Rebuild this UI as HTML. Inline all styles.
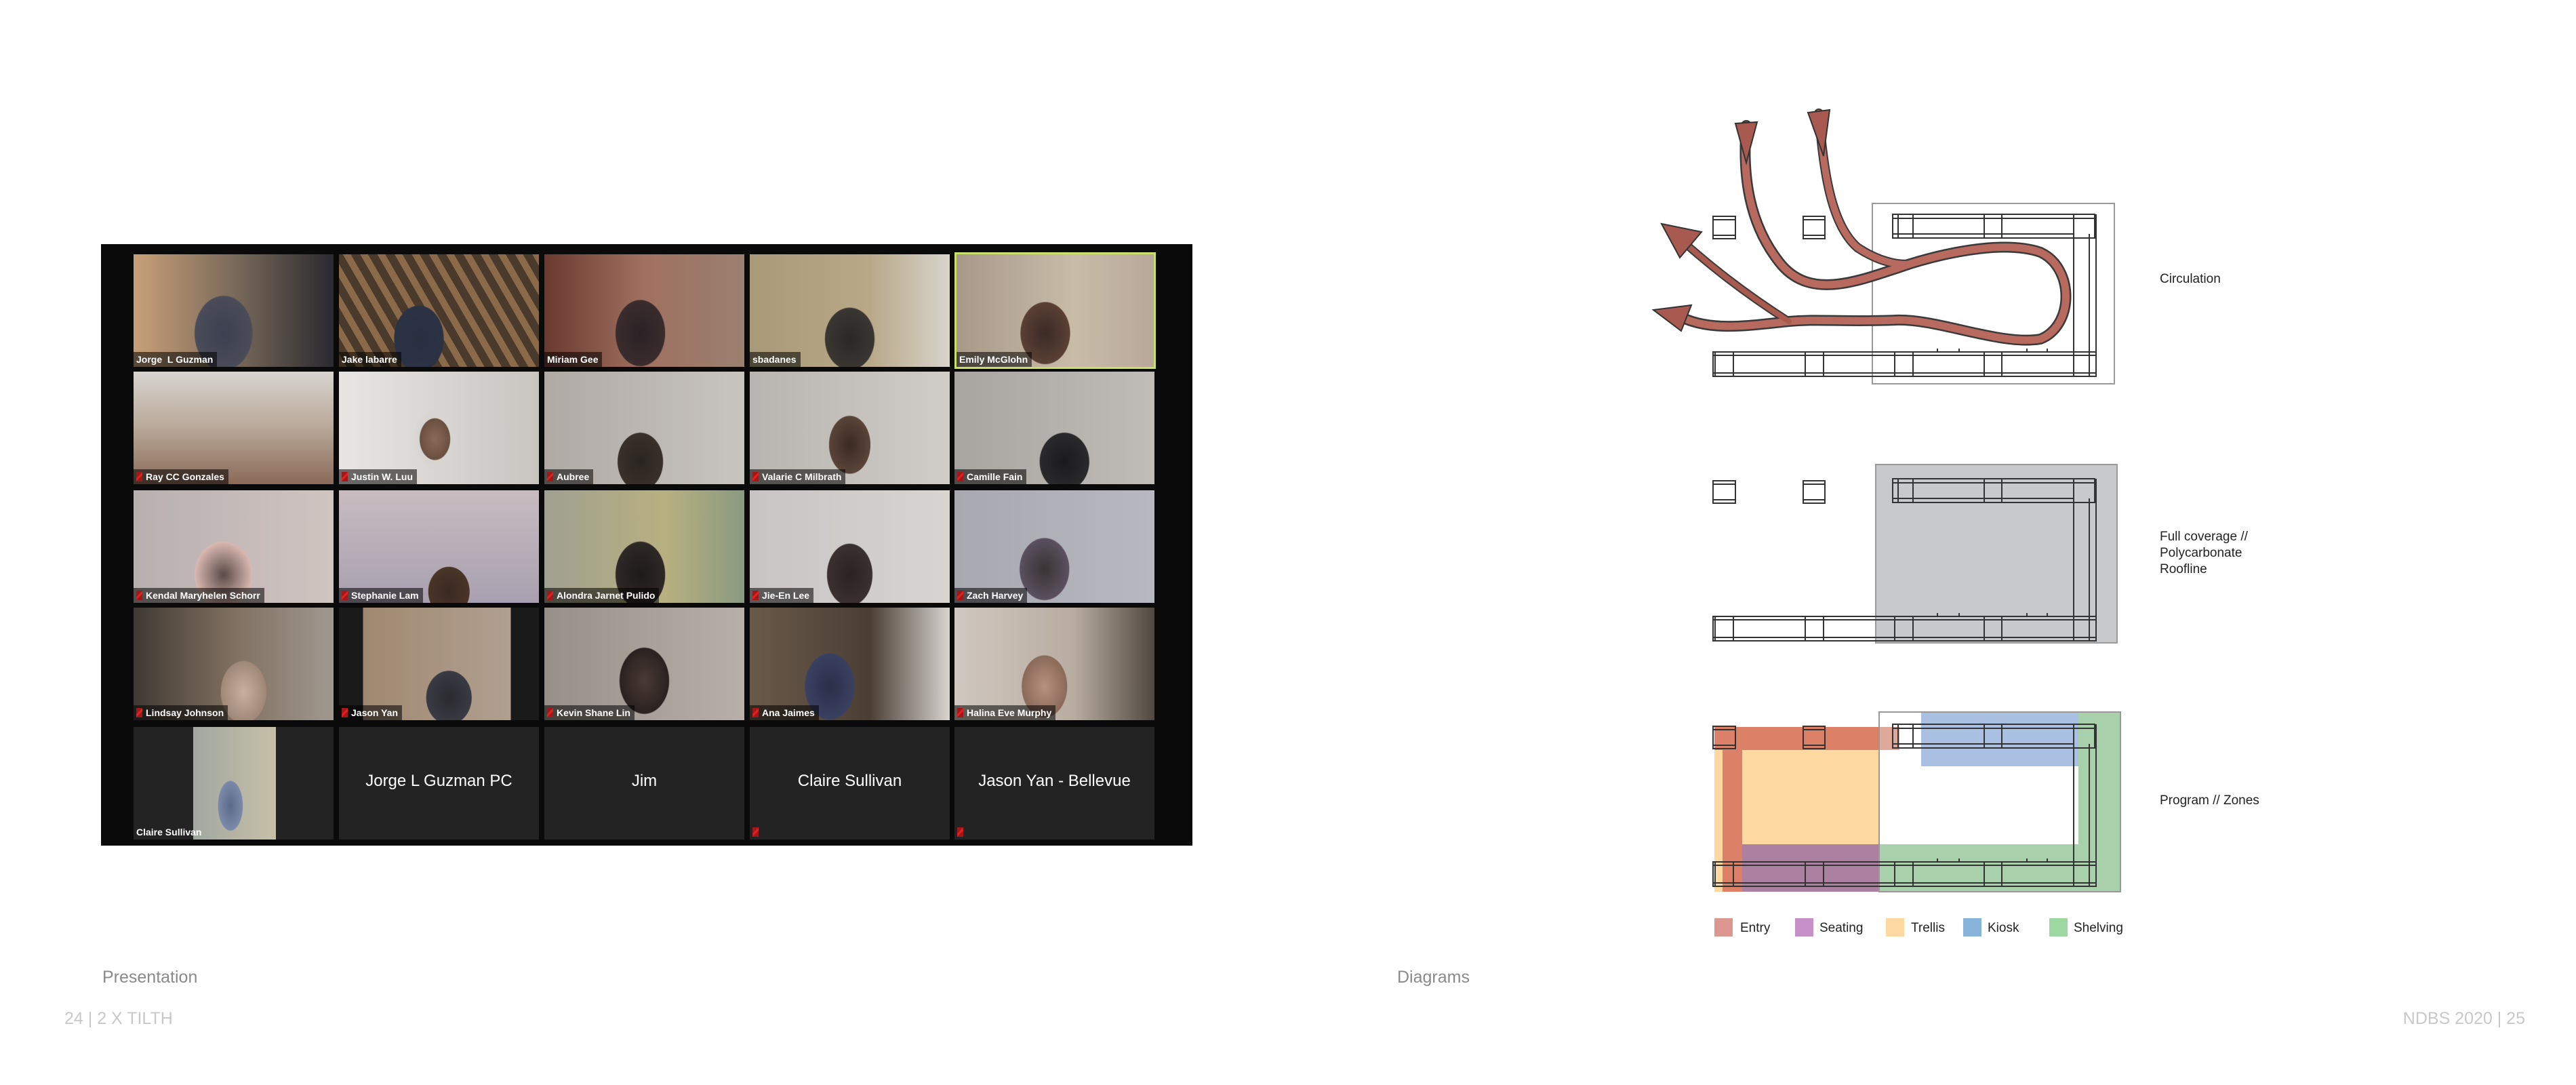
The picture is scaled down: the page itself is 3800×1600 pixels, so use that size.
<!DOCTYPE html>
<html><head><meta charset="utf-8"><style>
html,body{margin:0;padding:0;background:#fff;}
body{width:3800px;height:1600px;position:relative;overflow:hidden;font-family:"Liberation Sans",sans-serif;}
.box{position:absolute;left:149px;top:360px;width:1610px;height:887px;background:#0a0a0a;}
.t{position:absolute;width:295px;height:166px;overflow:hidden;}
.n{position:absolute;left:0;bottom:0;height:22px;line-height:22px;padding:0 6px 0 4px;background:rgba(0,0,0,.55);color:#fff;font-size:14px;font-family:"Liberation Sans Narrow","Liberation Sans",sans-serif;font-weight:bold;white-space:nowrap;}
.n i{display:inline-block;width:9px;height:14px;margin-right:5px;vertical-align:-2px;background:linear-gradient(135deg,transparent 40%,#e02020 40%,#e02020 60%,transparent 60%),#a01818;}
.d{background:#232323;}
.c{position:absolute;left:0;right:0;top:66px;text-align:center;color:#fff;font-size:24px;font-family:"Liberation Sans Narrow","Liberation Sans",sans-serif;}
.lab{position:absolute;font-size:19px;color:#222;line-height:24px;}
.foot{position:absolute;font-size:25px;}
</style></head><body>
<div class="box"></div>

<!-- row 1 -->
<div class="t" style="left:197px;top:375px;background:radial-gradient(ellipse 70px 90px at 45% 70%,#3c4050 0,#4a4c58 60%,transparent 62%),linear-gradient(90deg,#c8a078,#7a6a5a 50%,#2a2a30)"><div class="n">Jorge &nbsp;L Guzman</div></div>
<div class="t" style="left:500px;top:375px;background:radial-gradient(ellipse 60px 80px at 40% 75%,#283040 0,#2a3244 60%,transparent 62%),repeating-linear-gradient(60deg,#8a6a48 0 10px,#4a3a2c 10px 22px)"><div class="n">Jake labarre</div></div>
<div class="t" style="left:803px;top:375px;background:radial-gradient(ellipse 60px 80px at 48% 70%,#2a2226 0,#3a2c2c 60%,transparent 62%),linear-gradient(90deg,#6a3a30,#a07060 50%,#9a8070)"><div class="n">Miriam Gee</div></div>
<div class="t" style="left:1106px;top:375px;background:radial-gradient(ellipse 60px 75px at 50% 75%,#2a2826 0,#3a3632 60%,transparent 62%),linear-gradient(90deg,#a89a78,#b8a888 60%,#d8d4cc)"><div class="n">sbadanes</div></div>
<div class="t" style="left:1408px;top:372px;width:297px;height:172px;background:#c8e06a"></div>
<div class="t" style="left:1411px;top:375px;width:291px;height:166px;background:radial-gradient(ellipse 60px 75px at 45% 70%,#3a2a26 0,#5a4034 60%,transparent 62%),linear-gradient(90deg,#a89888,#c8bca8 60%,#b8a898)"><div class="n">Emily McGlohn</div></div>
<!-- row 2 -->
<div class="t" style="left:197px;top:548px;background:linear-gradient(180deg,#d8d4d0,#b8a898 50%,#8a6a58)"><div class="n"><i></i>Ray CC Gonzales</div></div>
<div class="t" style="left:500px;top:548px;background:radial-gradient(ellipse 55px 75px at 48% 60%,#8a6a58 0,#6a5040 40%,#d8d4d0 42%,transparent 62%),linear-gradient(90deg,#e8e6e4,#c8c4c0)"><div class="n"><i></i>Justin W. Luu</div></div>
<div class="t" style="left:803px;top:548px;background:radial-gradient(ellipse 55px 70px at 48% 80%,#2a2420 0,#3a302a 60%,transparent 62%),linear-gradient(90deg,#b0aaa5,#c8c4c0)"><div class="n"><i></i>Aubree</div></div>
<div class="t" style="left:1106px;top:548px;background:radial-gradient(ellipse 50px 70px at 50% 65%,#3a2a24 0,#5a4438 60%,transparent 62%),linear-gradient(90deg,#b8b4b0,#d0ccc8)"><div class="n"><i></i>Valarie C Milbrath</div></div>
<div class="t" style="left:1408px;top:548px;background:radial-gradient(ellipse 60px 70px at 55% 80%,#1a1a1c 0,#2a2a2c 60%,transparent 62%),linear-gradient(90deg,#a8a4a0,#c0bcb8)"><div class="n"><i></i>Camille Fain</div></div>
<!-- row 3 -->
<div class="t" style="left:197px;top:723px;background:radial-gradient(ellipse 70px 80px at 45% 75%,#5a4a48 0,#d8b8b0 60%,transparent 62%),linear-gradient(90deg,#b8b0b0,#d0c4c0)"><div class="n"><i></i>Kendal Maryhelen Schorr</div></div>
<div class="t" style="left:500px;top:723px;background:radial-gradient(ellipse 50px 60px at 55% 90%,#3a2a22 0,#4a3428 60%,transparent 62%),linear-gradient(180deg,#c8bcc0,#a8a0b0)"><div class="n"><i></i>Stephanie Lam</div></div>
<div class="t" style="left:803px;top:723px;background:radial-gradient(ellipse 60px 80px at 48% 75%,#1e1a1a 0,#2e2826 60%,transparent 62%),linear-gradient(90deg,#a0a090,#b8b080 60%,#8a9a80)"><div class="n"><i></i>Alondra Jarnet Pulido</div></div>
<div class="t" style="left:1106px;top:723px;background:radial-gradient(ellipse 55px 75px at 50% 75%,#2a2220 0,#3a3030 60%,transparent 62%),linear-gradient(90deg,#c8c4c4,#d8d4d0)"><div class="n"><i></i>Jie-En Lee</div></div>
<div class="t" style="left:1408px;top:723px;background:radial-gradient(ellipse 60px 75px at 45% 70%,#3a3434 0,#5a5060 60%,transparent 62%),linear-gradient(90deg,#a8a8b0,#b8b8c0)"><div class="n"><i></i>Zach Harvey</div></div>
<!-- row 4 -->
<div class="t" style="left:197px;top:896px;background:radial-gradient(ellipse 55px 75px at 55% 75%,#c8b0a0 0,#a08878 60%,transparent 62%),linear-gradient(90deg,#403a34,#807060 50%,#a09890)"><div class="n"><i></i>Lindsay Johnson</div></div>
<div class="t" style="left:500px;top:896px;background:radial-gradient(ellipse 55px 65px at 55% 80%,#2a2a30 0,#3a3a44 60%,transparent 62%),linear-gradient(90deg,#1a1a1a 12%,#a08870 12%,#b0a090 86%,#1a1a1a 86%)"><div class="n"><i></i>Jason Yan</div></div>
<div class="t" style="left:803px;top:896px;background:radial-gradient(ellipse 60px 80px at 50% 65%,#4a3a34 0,#2a2220 60%,transparent 62%),linear-gradient(90deg,#989088,#b8b0a8)"><div class="n"><i></i>Kevin Shane Lin</div></div>
<div class="t" style="left:1106px;top:896px;background:radial-gradient(ellipse 60px 80px at 40% 70%,#2a3048 0,#3a4060 60%,transparent 62%),linear-gradient(90deg,#6a5a4a,#4a3e34 60%,#d8d4d0)"><div class="n"><i></i>Ana Jaimes</div></div>
<div class="t" style="left:1408px;top:896px;background:radial-gradient(ellipse 55px 75px at 45% 70%,#b89080 0,#8a6a58 60%,transparent 62%),linear-gradient(90deg,#d0c8c0,#b8aca0 60%,#504840)"><div class="n"><i></i>Halina Eve Murphy</div></div>
<!-- row 5 -->
<div class="t d" style="left:197px;top:1072px"><div style="position:absolute;left:88px;top:0;width:122px;height:166px;background:radial-gradient(ellipse 30px 60px at 45% 70%,#5a6a88 0,#7a8aa8 60%,transparent 62%),linear-gradient(90deg,#a0a8a0,#c8c0a8)"></div><div class="n" style="background:none">Claire Sullivan</div></div>
<div class="t d" style="left:500px;top:1072px"><div class="c">Jorge L Guzman PC</div></div>
<div class="t d" style="left:803px;top:1072px"><div class="c">Jim</div></div>
<div class="t d" style="left:1106px;top:1072px"><div class="c">Claire Sullivan</div><div class="n" style="background:none"><i></i></div></div>
<div class="t d" style="left:1408px;top:1072px"><div class="c">Jason Yan - Bellevue</div><div class="n" style="background:none"><i></i></div></div>

<div class="foot" style="left:151px;top:1427px;color:#8a8a8a">Presentation</div>
<div class="foot" style="left:95px;top:1488px;color:#c8c8c8">24 | 2 X TILTH</div>
<div class="foot" style="left:2061px;top:1427px;color:#8a8a8a">Diagrams</div>
<div class="foot" style="right:75px;top:1488px;color:#c8c8c8">NDBS 2020 | 25</div>

<svg width="3800" height="1600" style="position:absolute;left:0;top:0" xmlns="http://www.w3.org/2000/svg">
<defs>
<g id="st" fill="none" stroke="#333" stroke-width="2">
<rect x="2527" y="319" width="33" height="33"/><line x1="2527" y1="324" x2="2560" y2="324"/><line x1="2527" y1="347" x2="2560" y2="347"/>
<rect x="2660" y="319" width="32" height="33"/><line x1="2660" y1="324" x2="2692" y2="324"/><line x1="2660" y1="347" x2="2692" y2="347"/>
<rect x="2792" y="316" width="298" height="35"/><line x1="2792" y1="322" x2="3090" y2="322"/><line x1="2792" y1="345" x2="3059" y2="345"/>
<line x1="2800" y1="316" x2="2800" y2="351"/><line x1="2822" y1="316" x2="2822" y2="351"/><line x1="2927" y1="316" x2="2927" y2="351"/><line x1="2953" y1="316" x2="2953" y2="351"/>
<line x1="3059" y1="316" x2="3059" y2="555"/><line x1="3082" y1="345" x2="3082" y2="555"/><line x1="3092" y1="316" x2="3092" y2="555"/>
<rect x="2527" y="519" width="565" height="36"/><line x1="2527" y1="524" x2="3092" y2="524"/><line x1="2527" y1="550" x2="3092" y2="550"/>
<line x1="2530" y1="519" x2="2530" y2="555"/><line x1="2557" y1="519" x2="2557" y2="555"/><line x1="2663" y1="519" x2="2663" y2="555"/><line x1="2690" y1="519" x2="2690" y2="555"/>
<line x1="2795" y1="519" x2="2795" y2="555"/><line x1="2822" y1="519" x2="2822" y2="555"/><line x1="2927" y1="519" x2="2927" y2="555"/><line x1="2953" y1="519" x2="2953" y2="555"/>
<line x1="2858" y1="514" x2="2858" y2="519"/><line x1="2890" y1="514" x2="2890" y2="519"/><line x1="2990" y1="514" x2="2990" y2="519"/><line x1="3020" y1="514" x2="3020" y2="519"/>
</g>
</defs>
<rect x="2762" y="300" width="357" height="266" fill="none" stroke="#999" stroke-width="2"/>
<use href="#st"/>
<g fill="none" stroke-linecap="round">
<path d="M2576,185 C2570,260 2580,330 2625,387 S2740,415 2818,389 C2880,370 2960,355 3010,372 C3060,395 3060,480 3010,500 C2950,510 2860,470 2797,472 C2720,475 2680,470 2639,474 C2580,480 2520,490 2475,465" stroke="#3a3a3a" stroke-width="16"/>
<path d="M2683,167 C2690,250 2700,330 2740,365 C2770,385 2800,392 2818,389" stroke="#3a3a3a" stroke-width="14"/>
<path d="M2639,474 C2570,430 2520,390 2470,345" stroke="#3a3a3a" stroke-width="12"/>
<path d="M2576,185 C2570,260 2580,330 2625,387 S2740,415 2818,389 C2880,370 2960,355 3010,372 C3060,395 3060,480 3010,500 C2950,510 2860,470 2797,472 C2720,475 2680,470 2639,474 C2580,480 2520,490 2475,465" stroke="#b86a5e" stroke-width="11"/>
<path d="M2683,167 C2690,250 2700,330 2740,365 C2770,385 2800,392 2818,389" stroke="#b86a5e" stroke-width="10"/>
<path d="M2639,474 C2570,430 2520,390 2470,345" stroke="#a85a4e" stroke-width="8"/>
</g>
<polygon points="2560,182 2592,180 2576,240" fill="#a85a50" stroke="#333" stroke-width="2"/>
<polygon points="2667,166 2699,162 2690,230" fill="#a85a50" stroke="#333" stroke-width="2"/>
<polygon points="2439,457 2495,450 2480,488" fill="#a85a50" stroke="#333" stroke-width="2"/>
<polygon points="2451,330 2510,342 2478,380" fill="#a85a50" stroke="#333" stroke-width="2"/>
<rect x="2767" y="685" width="356" height="263" fill="#c8c9cb" stroke="#999" stroke-width="2"/>
<use href="#st" transform="translate(0,390)"/>
<rect x="2529" y="1072" width="243" height="243" fill="#fdd8a0"/>
<rect x="2570" y="1245" width="202" height="70" fill="#ab80a0"/>
<rect x="2772" y="1245" width="294" height="70" fill="#a8d0ab"/>
<rect x="3066" y="1050" width="62" height="265" fill="#a8d0ab"/>
<rect x="2834" y="1050" width="232" height="80" fill="#a9c0e2"/>
<rect x="2541" y="1072" width="29" height="243" fill="#dd8068"/>
<rect x="2529" y="1072" width="243" height="34" fill="#dd8068"/>
<rect x="2772" y="1072" width="30" height="34" fill="#e0a898"/>
<rect x="2772" y="1050" width="356" height="265" fill="none" stroke="#999" stroke-width="2"/>
<use href="#st" transform="translate(0,752)"/>
<rect x="2529" y="1354" width="27" height="27" fill="#dc9890"/>
<rect x="2648" y="1354" width="27" height="27" fill="#c690c8"/>
<rect x="2782" y="1354" width="27" height="27" fill="#fdd8a0"/>
<rect x="2896" y="1354" width="27" height="27" fill="#88b4dc"/>
<rect x="3023" y="1354" width="27" height="27" fill="#9cd8a0"/>
<g font-family="Liberation Sans, sans-serif" font-size="19" fill="#222">
<text x="2567" y="1374">Entry</text><text x="2684" y="1374">Seating</text><text x="2819" y="1374">Trellis</text><text x="2932" y="1374">Kiosk</text><text x="3059" y="1374">Shelving</text>
</g>
</svg>
<div class="lab" style="left:3186px;top:400px">Circulation</div>
<div class="lab" style="left:3186px;top:780px">Full coverage //<br>Polycarbonate<br>Roofline</div>
<div class="lab" style="left:3186px;top:1169px">Program // Zones</div>
</body></html>
